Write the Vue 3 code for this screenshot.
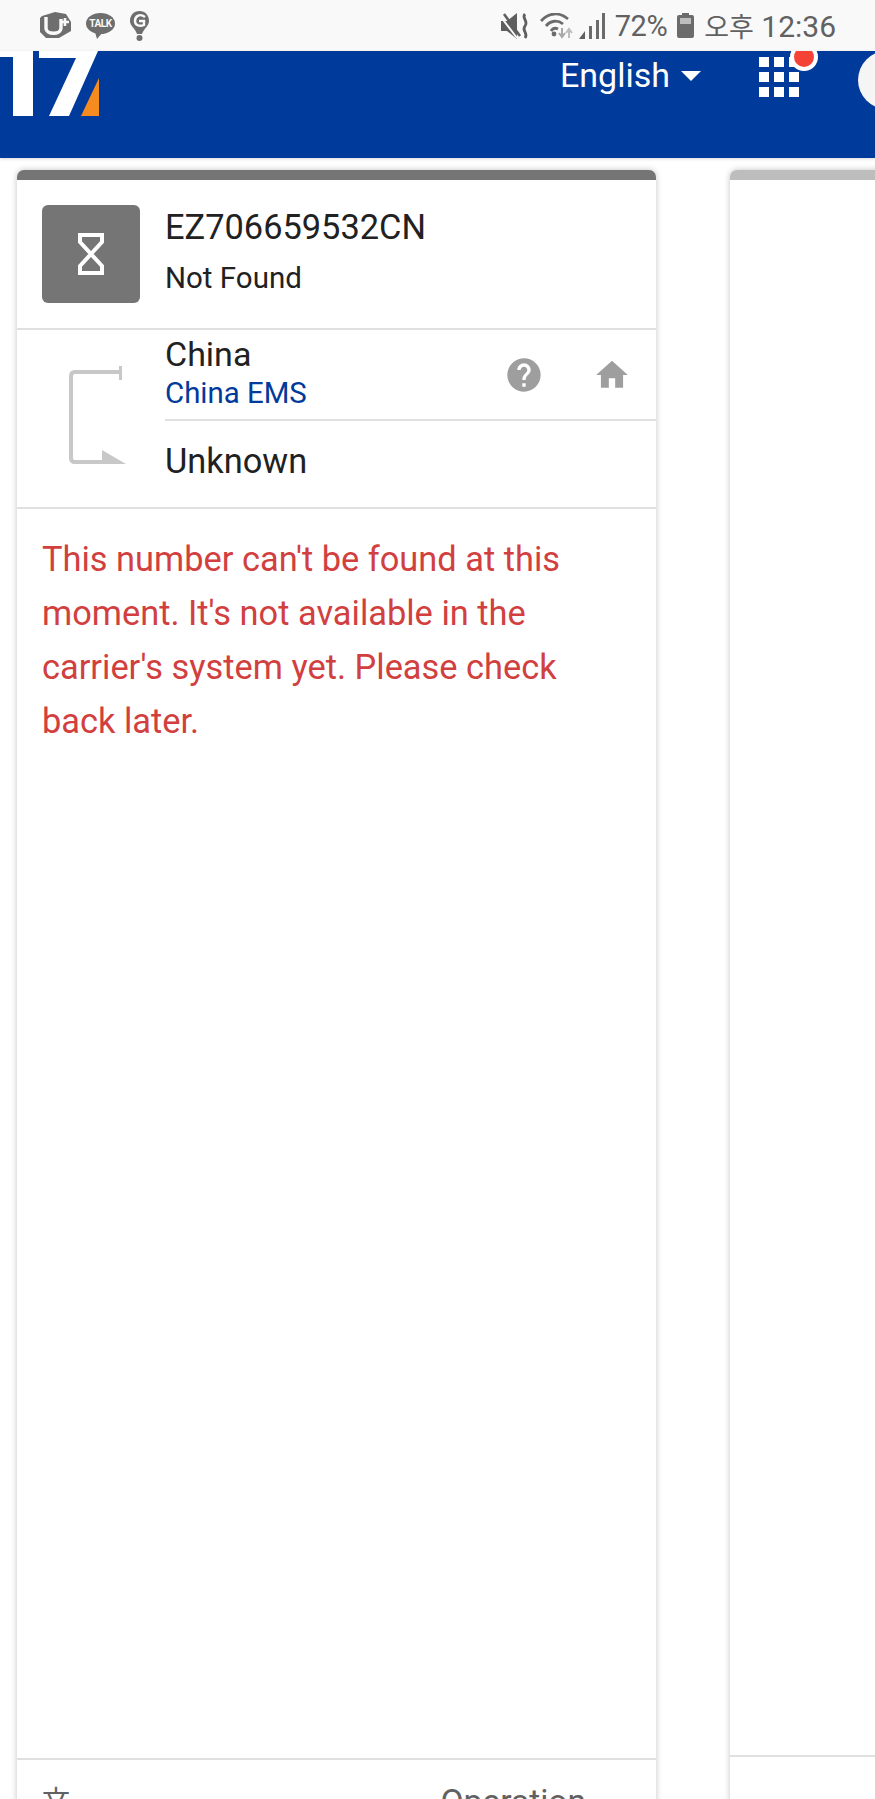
<template>
  <div class="page">
    <div class="status-bar">
      <div class="status-left">
        <svg class="ic-uplus" width="31" height="27" viewBox="0 0 31 27">
          <path d="M2 4 L15 0 L26 2 L31 10 V19 L19 26 L6 26 L0 20 V6 Z" fill="#6e6e6e" />
          <path d="M6 5 V16 C6 23 21 23 21 16 V7" fill="none" stroke="#f9f9f9" stroke-width="3.4" />
          <path d="M21 10 h8 M25 6 v8" stroke="#f9f9f9" stroke-width="2.6" />
        </svg>
        <div class="talk">
          <span>TALK</span>
          <i></i>
        </div>
        <svg width="19" height="30" viewBox="0 0 19 30">
          <path d="M9.5 0 C4 0 0 4 0 10 C0 15 5 17 7 23 H12 C14 17 19 15 19 10 C19 4 15 0 9.5 0 Z" fill="#6e6e6e" />
          <path d="M15 6 C10 2 5 5 5 10 C5 14 9 16 14 14 V10 H9" fill="none" stroke="#f9f9f9" stroke-width="2.4" />
          <circle cx="9.5" cy="27" r="3" fill="#6e6e6e" />
        </svg>
      </div>
      <div class="status-right">
        <svg class="ic-mute" width="28" height="26" viewBox="0 0 28 26">
          <path d="M0 8 H6 L16 0 V26 L6 18 H0 Z" fill="#5f5f5f" />
          <path d="M0 4 L16 25" stroke="#f9f9f9" stroke-width="2" />
          <path d="M3 1 L19 23" stroke="#5f5f5f" stroke-width="2.6" />
          <path d="M24 1 C20 5 28 8 24 13 C20 18 28 20 24 25" fill="none" stroke="#5f5f5f" stroke-width="2.8" />
        </svg>
        <svg class="ic-wifi" width="33" height="26" viewBox="0 0 33 26">
          <path d="M1 8 C9 -1 20 -1 28 6 M6 13 C11 7 18 7 23 11 M11 18 C13 15 16 15 18 16" fill="none" stroke="#6b6b6b" stroke-width="2.8" />
          <circle cx="14" cy="21" r="2.4" fill="#6b6b6b" />
          <path d="M22 15 v8 M19 20 l3 4 l3 -4" fill="none" stroke="#a8a8a8" stroke-width="2" />
          <path d="M29 25 v-8 M26 20 l3 -4 l3 4" fill="none" stroke="#bdbdbd" stroke-width="2" />
        </svg>
        <svg class="ic-signal" width="26" height="26" viewBox="0 0 26 26">
          <path d="M0 26 L6 18 V26 Z" fill="#5f5f5f" />
          <rect x="10" y="13" width="3" height="13" fill="#6b6b6b" />
          <rect x="17" y="7" width="3" height="19" fill="#6b6b6b" />
          <rect x="23" y="0" width="3" height="26" fill="#6b6b6b" />
        </svg>
        <span class="pct">72%</span>
        <svg class="ic-batt" width="17" height="25" viewBox="0 0 17 25">
          <path d="M5 0 H12 V2 H15 Q17 2 17 4 V23 Q17 25 15 25 H2 Q0 25 0 23 V4 Q0 2 2 2 H5 Z" fill="#6b6b6b" />
          <rect x="3" y="5" width="11" height="6" fill="#bdbdbd" />
        </svg>
        <span class="clock"><span class="ko">오후</span> 12:36</span>
      </div>
    </div>

    <header class="topbar">
      <svg class="logo" width="100" height="65" viewBox="0 0 100 65">
        <path d="M0 0 H33 V65 H13 V6 H0 Z" fill="#fff" />
        <path d="M39 0 H98 L69 65 H49 L76 7 H39 Z" fill="#fff" />
        <path d="M81 65 L99 27 V65 Z" fill="#f68b1f" />
      </svg>
      <div class="lang">English<i class="caret"></i></div>
      <div class="apps">
        <i v-for="n in 9" :key="n"></i>
        <b class="dot"></b>
      </div>
      <div class="avatar"></div>
    </header>

    <main class="board">
      <section class="card">
        <div class="head">
          <div class="state-box">
            <svg width="32" height="46" viewBox="0 0 32 46">
              <path d="M5 4 H27 V11 L16 23 L27 35 V42 H5 V35 L16 23 L5 11 Z" fill="none" stroke="#fff" stroke-width="4" />
            </svg>
          </div>
          <div class="head-text">
            <div class="number">EZ706659532CN</div>
            <div class="state">Not Found</div>
          </div>
        </div>

        <div class="route">
          <div class="route-icon">
            <svg width="62" height="102" viewBox="0 0 62 102">
              <path d="M54 7 H8 Q4 7 4 11 V93 Q4 97 8 97 H38" fill="none" stroke="#c8c8c8" stroke-width="4" />
              <path d="M52 1 H55 V15 H52 Z" fill="#c8c8c8" />
              <path d="M35 85 L59 99 H35 Z" fill="#c8c8c8" />
            </svg>
          </div>
          <div class="route-body">
            <div class="route-from">
              <div class="carrier">
                <div class="country">China</div>
                <a class="carrier-name">China EMS</a>
              </div>
              <svg class="act-help" width="40" height="40" viewBox="0 0 24 24">
                <path fill="#9e9e9e" d="M12 2C6.48 2 2 6.48 2 12s4.48 10 10 10 10-4.48 10-10S17.52 2 12 2zm1 17h-2v-2h2v2zm2.07-7.75l-.9.92C13.45 12.9 13 13.5 13 15h-2v-.5c0-1.1.45-2.1 1.17-2.83l1.24-1.26c.37-.36.59-.86.59-1.41 0-1.1-.9-2-2-2s-2 .9-2 2H8c0-2.21 1.79-4 4-4s4 1.79 4 4c0 .88-.36 1.68-.93 2.25z" />
              </svg>
              <svg class="act-home" width="38" height="38" viewBox="0 0 24 24">
                <path fill="#9e9e9e" d="M10 20v-6h4v6h5v-8h3L12 3 2 12h3v8z" />
              </svg>
            </div>
            <div class="route-to">Unknown</div>
          </div>
        </div>

        <p class="message">This number can't be found at this moment. It's not available in the carrier's system yet. Please check back later.</p>

        <div class="foot">
          <span class="foot-lang">文</span>
          <span class="foot-op">Operation</span>
        </div>
      </section>

      <section class="card side">
        <div class="side-body"></div>
        <div class="side-foot"></div>
      </section>
    </main>
  </div>
</template>

<script setup>
</script>

<style>
html, body {
  margin: 0;
  background: #fff;
}
</style>

<style scoped>
.page {
  width: 875px;
  height: 1799px;
  overflow: hidden;
  font-family: Roboto, "Noto Sans CJK KR", sans-serif;
  color: #212121;
  background: #fff;
}
.status-bar {
  height: 51px;
  background: #f9f9f9;
  display: flex;
  justify-content: space-between;
  align-items: center;
  padding: 0 39px 0 40px;
  box-sizing: border-box;
  color: #616161;
}
.status-left {
  display: flex;
  align-items: center;
  gap: 15px;
}
.talk {
  position: relative;
  width: 29px;
  height: 21px;
  border-radius: 50%;
  background: #6e6e6e;
  color: #f9f9f9;
  font-size: 10px;
  font-weight: 700;
  line-height: 21px;
  text-align: center;
  margin-bottom: 5px;
}
.talk span {
  letter-spacing: -0.4px;
}
.talk i {
  position: absolute;
  left: 9px;
  bottom: -5px;
  border-left: 2px solid transparent;
  border-right: 6px solid transparent;
  border-top: 7px solid #6e6e6e;
}
.status-right {
  display: flex;
  align-items: center;
}
.ic-wifi {
  margin-left: 11px;
}
.ic-signal {
  margin-left: 6px;
}
.pct {
  font-size: 29px;
  margin-left: 10px;
  letter-spacing: -0.5px;
}
.ic-batt {
  margin-left: 10px;
}
.clock {
  font-size: 30px;
  margin-left: 10px;
  white-space: nowrap;
}
.ko {
  font-size: 27px;
}
.topbar {
  height: 107px;
  background: #003a9b;
  display: flex;
  align-items: flex-start;
  overflow: hidden;
  box-shadow: 0 1px 3px rgba(0, 0, 0, 0.15);
  position: relative;
}
.logo {
  flex-shrink: 0;
}
.lang {
  margin-left: auto;
  display: flex;
  align-items: center;
  color: #fff;
  font-size: 34px;
  line-height: 40px;
  padding-top: 4px;
}
.caret {
  margin-left: 11px;
  margin-top: 2px;
  border-left: 10px solid transparent;
  border-right: 10px solid transparent;
  border-top: 10px solid #fff;
}
.apps {
  position: relative;
  margin-left: 58px;
  margin-top: 6px;
  width: 40px;
  height: 40px;
  display: grid;
  grid-template-columns: repeat(3, 10px);
  grid-template-rows: repeat(3, 10px);
  gap: 5px;
}
.apps i {
  background: #fff;
}
.dot {
  position: absolute;
  left: 31px;
  top: -14px;
  width: 20px;
  height: 20px;
  border: 4px solid #fff;
  border-radius: 50%;
  background: #f44336;
}
.avatar {
  flex-shrink: 0;
  width: 58px;
  height: 58px;
  margin-left: 59px;
  margin-right: -41px;
  border-radius: 50%;
  background: #f5f5f5;
}
.board {
  display: flex;
  gap: 74px;
  padding: 12px 0 0 17px;
}
.card {
  flex-shrink: 0;
  width: 639px;
  height: 1700px;
  box-sizing: border-box;
  border-top: 10px solid #757575;
  border-radius: 7px 7px 0 0;
  background: #fff;
  box-shadow: 0 0 6px rgba(0, 0, 0, 0.24);
  display: flex;
  flex-direction: column;
}
.head {
  height: 150px;
  box-sizing: border-box;
  padding: 25px 25px 0;
  display: flex;
  gap: 25px;
  border-bottom: 2px solid #e0e0e0;
  flex-shrink: 0;
}
.state-box {
  width: 98px;
  height: 98px;
  border-radius: 6px;
  background: #757575;
  display: flex;
  align-items: center;
  justify-content: center;
}
.number {
  font-size: 34.4px;
  line-height: 40px;
  margin-top: 2px;
}
.state {
  font-size: 29.5px;
  line-height: 40px;
  margin-top: 11px;
}
.route {
  height: 179px;
  box-sizing: border-box;
  display: flex;
  border-bottom: 2px solid #e0e0e0;
  flex-shrink: 0;
}
.route-icon {
  width: 148px;
  flex-shrink: 0;
  display: flex;
  justify-content: flex-start;
  padding: 35px 0 0 50px;
  box-sizing: border-box;
}
.route-body {
  flex: 1;
  display: flex;
  flex-direction: column;
}
.route-from {
  height: 91px;
  box-sizing: border-box;
  display: flex;
  align-items: center;
  border-bottom: 2px solid #e0e0e0;
  padding-right: 25px;
}
.carrier {
  flex: 1;
  padding-bottom: 2px;
}
.country {
  font-size: 34px;
  line-height: 38px;
}
.carrier-name {
  display: block;
  font-size: 29.4px;
  line-height: 40px;
  color: #003a9b;
}
.act-help {
  margin-right: 49px;
}
.route-to {
  flex: 1;
  display: flex;
  align-items: center;
  font-size: 34.4px;
  padding-bottom: 6px;
}
.message {
  margin: 0;
  padding: 23px 25px 0;
  font-size: 34.4px;
  line-height: 54px;
  color: #d23f3f;
  flex: 1;
}
.foot {
  height: 112px;
  box-sizing: border-box;
  flex-shrink: 0;
  border-top: 2px solid #e0e0e0;
  padding: 22px 70px 0 25px;
  display: flex;
  justify-content: space-between;
  font-size: 33.6px;
  line-height: 40px;
  color: #616161;
}
.foot-lang {
  font-size: 28px;
}
.side {
  border-top-color: #bdbdbd;
}
.side-body {
  height: 1575px;
  border-bottom: 2px solid #e0e0e0;
}
.side-foot {
  flex: 1;
}
</style>
